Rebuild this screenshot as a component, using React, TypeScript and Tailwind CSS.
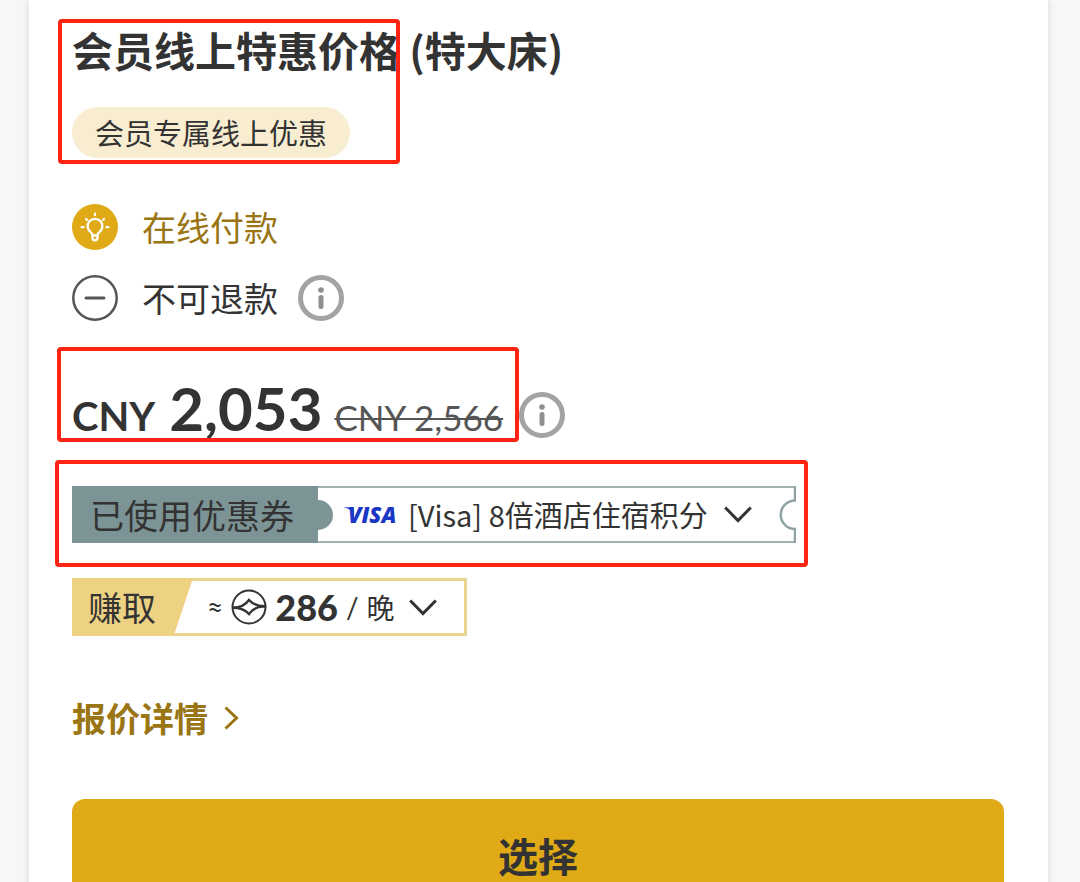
import type { ReactNode } from "react";

// red rectangle laid over a block
function Highlight({ className }: { className: string }) {
  return (
    <span
      aria-hidden="true"
      className={`pointer-events-none absolute rounded-sm border-4 border-[#ff2313] ${className}`}
    />
  );
}

function InfoButton({ label }: { label: string }) {
  return (
    <button type="button" aria-label={label} className="shrink-0">
      <svg viewBox="0 0 46 46" className="size-[46px]" fill="none">
        <circle cx="23" cy="23" r="20.500" stroke="#a3a3a3" strokeWidth="5" />
        <circle cx="23" cy="15" r="2.800" fill="#8f8f8f" />
        <path d="M23 22.500v9" stroke="#8f8f8f" strokeWidth="5" strokeLinecap="round" />
      </svg>
    </button>
  );
}

function BulbIcon() {
  return (
    <svg viewBox="0 0 46 46" className="size-[46px] shrink-0" fill="none">
      <circle cx="23" cy="23" r="23" fill="#dfaa15" />
      <g stroke="#fff" strokeWidth="2.300" strokeLinecap="round" strokeLinejoin="round">
        <path d="M20.500 31.500c0-1.500-.5-2.200-1.600-3.100a7.400 7.400 0 1 1 8.200 0c-1.100.9-1.600 1.600-1.600 3.100v2.300a2.500 2.500 0 0 1-5 0z" />
        <path d="M20.500 31.500h5" />
        <path d="M23 9.700v1.500M14 15l1 1M32 15l-1 1M9.700 23.200h1.800M34.500 23.200h1.800" />
      </g>
    </svg>
  );
}

function MinusIcon() {
  return (
    <svg viewBox="0 0 46 46" className="size-[46px] shrink-0" fill="none" stroke="#555">
      <circle cx="23" cy="23" r="21.700" strokeWidth="2.500" />
      <path d="M14 23h18" strokeWidth="3" strokeLinecap="round" />
    </svg>
  );
}

function ChevronDown() {
  return (
    <svg viewBox="0 0 28 17" className="h-[17px] w-7 shrink-0" fill="none">
      <path d="M1.200 1.500 14 14.500 26.800 1.500" stroke="#333" strokeWidth="3" />
    </svg>
  );
}

function VisaLogo() {
  return (
    <svg viewBox="0 0 55 32" className="h-8 w-[55px] shrink-0" fill="#1a36c4" role="img" aria-label="VISA">
      <path d="M0 8.300h9l2 6C9 11.500 5 9.300 0 8.300z" />
      <text x="5" y="24" fontFamily="'Open Sans', sans-serif" fontSize="22" fontWeight="800" fontStyle="italic">
        VISA
      </text>
    </svg>
  );
}

function PointsIcon() {
  return (
    <svg viewBox="0 0 36 36" className="size-9 shrink-0" fill="none" stroke="#333">
      <circle cx="18" cy="18" r="16.500" strokeWidth="2" />
      <path d="M2 18.800C8.500 18.800 14 16.500 18 11c4 4.500 9.500 6.200 16 6.200" strokeWidth="2.500" />
      <path d="M2 18.800C8.500 18.800 14 20.500 18 25c4-5.500 9.500-7.800 16-7.800" strokeWidth="2.500" />
    </svg>
  );
}

function Policy({ icon, children }: { icon: ReactNode; children: ReactNode }) {
  return (
    <li className="flex items-center gap-6">
      {icon}
      {children}
    </li>
  );
}

export default function App() {
  return (
    <div className="h-screen overflow-hidden bg-[#f8f7f5] pl-[29px] pr-8 font-['Noto_Sans_CJK_SC',sans-serif] text-[#333]">
      <main className="min-h-full bg-white pb-11 pl-[43px] pr-11 pt-7 shadow-[0_0_8px_rgba(0,0,0,0.12)]">
        <header className="relative">
          <h1 className="text-[41px] font-bold leading-[43px]">会员线上特惠价格 (特大床)</h1>
          <span className="mt-9 inline-flex h-[51px] items-center rounded-full bg-[#f8edd0] px-[23px] text-[29px] leading-none">
            会员专属线上优惠
          </span>
          <Highlight className="-bottom-1.5 -left-3.5 -top-[9px] w-[342px]" />
        </header>

        <ul className="mt-[46px] flex flex-col gap-[25px] text-[34px] leading-none">
          <Policy icon={<BulbIcon />}>
            <span className="text-[#9a7514]">在线付款</span>
          </Policy>
          <Policy icon={<MinusIcon />}>
            <span className="flex items-center gap-5">
              不可退款
              <InfoButton label="退款说明" />
            </span>
          </Policy>
        </ul>

        <div className="mt-[57px] flex items-end font-['Lato',sans-serif]">
          <p className="relative flex items-baseline leading-10">
            <span className="text-[40px] font-bold">CNY</span>
            <span className="ml-3.5 text-[60px] font-bold leading-[60px]">2,053</span>
            <s className="ml-3 text-[35px] text-[#555] decoration-2">CNY 2,566</s>
            <Highlight className="-bottom-1 -left-[15px] -right-4 -top-[31px]" />
          </p>
          <span className="ml-4 flex">
            <InfoButton label="价格说明" />
          </span>
        </div>

        <div className="relative mt-12 w-fit">
          <div className="flex h-[57px] w-[724px] max-w-full items-stretch border-2 border-r-0 border-[#a3b3b4]">
            <span className="-my-0.5 -ml-0.5 flex w-[246px] shrink-0 items-center bg-[#7d9496] pl-[18px] text-[34px] leading-none">
              已使用优惠券
            </span>
            <svg viewBox="0 0 15 30" className="h-[30px] w-[15px] shrink-0 self-center" fill="#7d9496">
              <path d="M0 0a15 15 0 0 1 0 30z" />
            </svg>
            <button type="button" className="ml-2.5 flex items-center whitespace-nowrap text-[29px] leading-none">
              <VisaLogo />
              <span className="ml-2.5">[Visa] 8倍酒店住宿积分</span>
              <span className="ml-4">
                <ChevronDown />
              </span>
            </button>
            <svg viewBox="0 0 17 57" className="-my-0.5 ml-auto h-[57px] w-[17px] shrink-0" fill="none" stroke="#8fa3a5" strokeWidth="2.500">
              <path d="M16 0v14.500A14 14 0 0 0 16 43v14" />
            </svg>
          </div>
          <Highlight className="-bottom-6 -left-[17px] -right-3 -top-[26px]" />
        </div>

        <button
          type="button"
          className="mt-[35px] flex h-[58px] w-[395px] max-w-full items-center border-[3px] border-[#ead592]"
        >
          <span className="-my-[3px] -ml-[3px] flex h-[58px] w-[121px] items-center bg-[#edd283] pl-4 text-[34px] leading-none [clip-path:polygon(0_0,100%_0,84%_100%,0_100%)]">
            赚取
          </span>
          <span className="ml-3.5 font-['Lato',sans-serif] text-[28px] leading-none">≈</span>
          <span className="ml-2">
            <PointsIcon />
          </span>
          <span className="ml-2 font-['Lato',sans-serif] text-[36px] font-black leading-none">286</span>
          <span className="ml-2 font-['Lato',sans-serif] text-[28px] leading-none">/</span>
          <span className="ml-2 text-[28px] leading-none">晚</span>
          <span className="ml-3.5">
            <ChevronDown />
          </span>
        </button>

        <a
          href="#details"
          className="mt-16 flex w-fit items-center gap-4 text-[34px] font-bold leading-9 text-[#9a7514]"
        >
          报价详情
          <svg viewBox="0 0 15 24" className="h-6 w-[15px]" fill="none" stroke="currentColor" strokeWidth="3">
            <path d="M1.500 1.500 12.500 12 1.500 22.500" />
          </svg>
        </a>

        <button
          type="button"
          className="mt-[63px] h-[118px] w-full rounded-[13px] bg-[#dfaa15] pb-1.5 text-[40px] font-bold leading-none"
        >
          选择
        </button>
      </main>
    </div>
  );
}
